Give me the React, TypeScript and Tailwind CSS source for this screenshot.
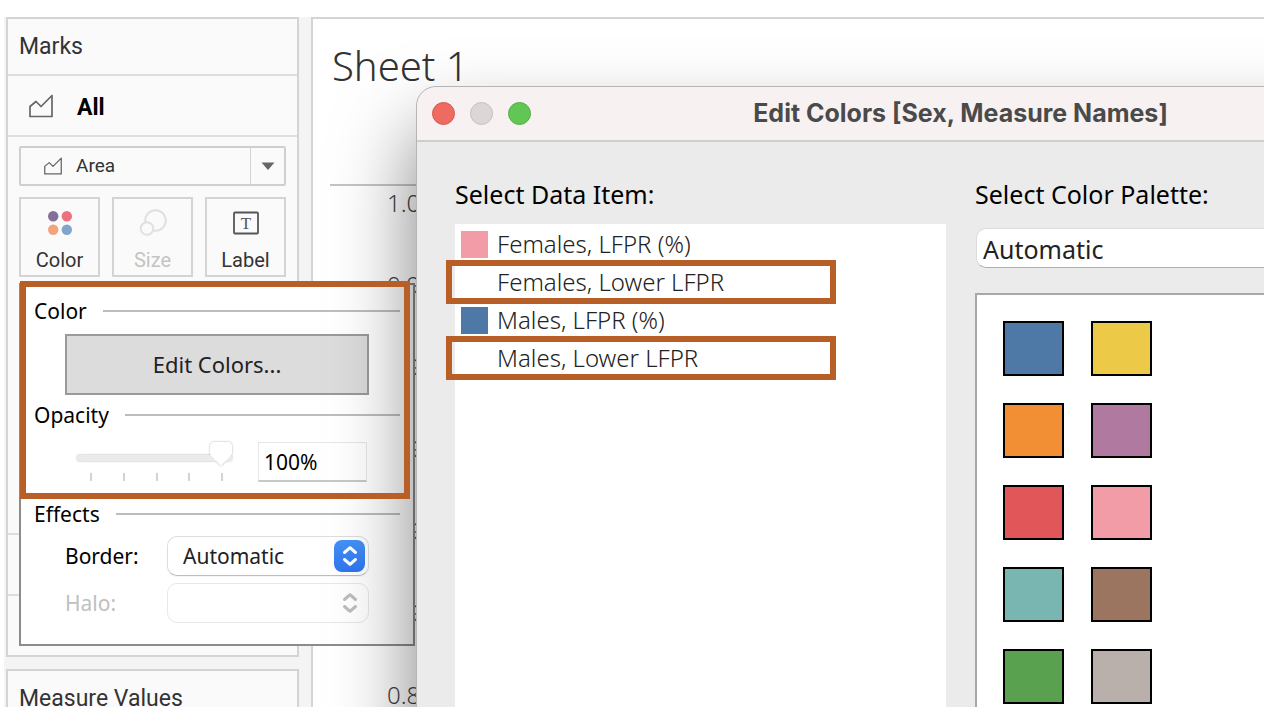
import type { ReactNode } from "react";

const PALETTE = [
  { name: "Blue", fill: "bg-[#4e79a7]" },
  { name: "Yellow", fill: "bg-[#edc948]" },
  { name: "Orange", fill: "bg-[#f28e34]" },
  { name: "Purple", fill: "bg-[#b0799f]" },
  { name: "Red", fill: "bg-[#e15759]" },
  { name: "Pink", fill: "bg-[#f29ca7]" },
  { name: "Teal", fill: "bg-[#79b6b1]" },
  { name: "Brown", fill: "bg-[#9b755f]" },
  { name: "Green", fill: "bg-[#59a14f]" },
  { name: "Grey", fill: "bg-[#bab0ab]" },
];

const ITEMS = [
  { label: "Females, LFPR (%)", fill: "bg-[#f29ca7]", marked: false },
  { label: "Females, Lower LFPR", fill: "bg-white", marked: true },
  { label: "Males, LFPR (%)", fill: "bg-[#4e79a7]", marked: false },
  { label: "Males, Lower LFPR", fill: "bg-white", marked: true },
];

const AXIS = ["1.00", "0.98", "0.96", "0.94", "0.92", "0.90", "0.88"];

function AreaIcon({ className }: { className: string }) {
  return (
    <svg viewBox="0 0 24 24" fill="none" stroke="#666" strokeWidth="1.7" strokeLinejoin="round" className={className} aria-hidden="true">
      <path d="M1 12.5 L7 7.5 L12 12.5 L23 1.5 V22.5 H1 Z" />
    </svg>
  );
}

function Chevrons({ className }: { className: string }) {
  return (
    <svg viewBox="0 0 16 24" fill="none" stroke="currentColor" strokeWidth="3" strokeLinecap="round" strokeLinejoin="round" className={className} aria-hidden="true">
      <path d="M2.5 8.5 L8 3.7 L13.5 8.5 M2.5 15.5 L8 20.3 L13.5 15.5" />
    </svg>
  );
}

function MarkButton({ label, disabled, children }: { label: string; disabled?: boolean; children: ReactNode }) {
  return (
    <button
      type="button"
      disabled={disabled}
      className="flex h-20 flex-1 flex-col items-center border-2 border-[#d4d4d4] bg-[#fafafa] pt-2 font-[Roboto,sans-serif] text-[20px] leading-7 text-[#333] disabled:text-[#c4c4c4]"
    >
      <span className="mb-[7px] flex h-8 items-center">{children}</span>
      {label}
    </button>
  );
}

function SectionTitle({ children }: { children: ReactNode }) {
  return (
    <h3 className="flex h-8 items-center gap-4 text-[21px] text-black">
      <span className="pt-0.5">{children}</span>
      <span className="h-0.5 flex-1 bg-[#bdbdbd]" />
    </h3>
  );
}

function Sidebar() {
  return (
    <aside className="flex w-[295px] shrink-0 flex-col gap-3 pr-0.5 font-[Roboto,sans-serif] text-[#333]">
      <section className="h-[640px] shrink-0 border-2 border-[#d4d4d4] bg-[#fafafa]">
        <h2 className="flex h-[55px] items-center px-[11px] pt-0.5 text-[23px]">Marks</h2>
        <div className="flex h-[63px] items-center border-y-2 border-[#dedede] px-[11px]">
          <AreaIcon className="ml-2.5 size-6" />
          <span className="ml-6 pt-1.5 text-[23px] font-bold text-black">All</span>
        </div>
        <div className="flex flex-col gap-[11px] px-[11px] pt-[9px]">
          <button type="button" className="flex h-10 items-stretch rounded-xs border-2 border-[#cfcfcf] text-[19px]">
            <span className="flex flex-1 items-center pl-[23px]">
              <AreaIcon className="size-[18px]" />
              <span className="ml-3.5">Area</span>
            </span>
            <span className="flex w-[34px] items-center justify-center border-l border-[#d4d4d4]">
              <svg viewBox="0 0 14 8" className="h-2 w-3.5" aria-hidden="true">
                <path d="M0.5 0.5 H13.5 L7 8 Z" fill="#666" />
              </svg>
            </span>
          </button>
          <div className="flex gap-3">
            <MarkButton label="Color">
              <svg viewBox="0 0 24 24" className="size-6" aria-hidden="true">
                <circle cx="5.2" cy="5.2" r="5.2" fill="#846f9b" />
                <circle cx="18.8" cy="5.2" r="5.2" fill="#ee7080" />
                <circle cx="5.2" cy="18.8" r="5.2" fill="#f2a57c" />
                <circle cx="18.8" cy="18.8" r="5.2" fill="#82a5cb" />
              </svg>
            </MarkButton>
            <MarkButton label="Size" disabled>
              <svg viewBox="0 0 28 28" fill="#fafafa" stroke="#e0e0e0" strokeWidth="2" className="size-7" aria-hidden="true">
                <circle cx="16.5" cy="11.5" r="10.3" />
                <circle cx="8" cy="19.5" r="6.3" />
              </svg>
            </MarkButton>
            <MarkButton label="Label">
              <svg viewBox="0 0 28 24" className="h-6 w-7" aria-hidden="true">
                <rect x="2" y="1.5" width="24" height="21" rx="1" fill="none" stroke="#555" strokeWidth="1.8" />
                <text x="14" y="18" textAnchor="middle" fill="#555" className="font-['Liberation_Serif',serif] text-[17px]">T</text>
              </svg>
            </MarkButton>
          </div>
        </div>
        <div className="mt-[256px] h-[63px] border-y-2 border-[#dedede]" />
      </section>
      <section className="flex-1 border-2 border-[#d4d4d4] bg-[#fafafa] px-[11px] pt-3">
        <h2 className="text-[23px] leading-8">Measure Values</h2>
      </section>
    </aside>
  );
}

function Sheet() {
  return (
    <section className="ml-2.5 flex-1 border-t-2 border-l-2 border-[#d4d4d4] bg-white pl-[17px]">
      <h1 className="pt-4 pl-0.5 text-[40px] leading-[62px] font-light text-[#333]">Sheet 1</h1>
      <div className="mt-[87px] border-t-2 border-[#c4c4c4] pl-[57px]">
        <ul className="flex flex-col gap-12 text-[24px] leading-[34px] font-light text-[#444]">
          {AXIS.map((v) => (
            <li key={v}>{v}</li>
          ))}
        </ul>
      </div>
    </section>
  );
}

function ColorPopup() {
  return (
    <div className="absolute top-[266px] left-[19px] w-[396px] border-2 border-[#8c8c8c] bg-white px-[13px] pt-2.5 pb-[21px] text-[21px] text-black">
      <SectionTitle>Color</SectionTitle>
      <button type="button" className="mt-[7px] mb-1 ml-[31px] h-[61px] w-[304px] border-2 border-[#9a9a9a] bg-[#dcdcdc] text-[22px] text-[#222]">
        Edit Colors...
      </button>
      <SectionTitle>Opacity</SectionTitle>
      <div className="mt-[11px] mb-4 ml-[43px] flex h-10 items-stretch gap-[26px]">
        <div className="flex w-[155px] flex-col">
          <input
            type="range"
            aria-label="Opacity"
            min={0}
            max={100}
            defaultValue={100}
            className="mt-1 h-6 w-full appearance-none bg-transparent drop-shadow-[0_0_1px_rgba(0,0,0,0.3)] [&::-webkit-slider-runnable-track]:h-1.5 [&::-webkit-slider-runnable-track]:rounded-full [&::-webkit-slider-runnable-track]:bg-[#ebebeb] [&::-webkit-slider-thumb]:-mt-[13px] [&::-webkit-slider-thumb]:h-6 [&::-webkit-slider-thumb]:w-[22px] [&::-webkit-slider-thumb]:appearance-none [&::-webkit-slider-thumb]:bg-white [&::-webkit-slider-thumb]:[clip-path:polygon(12%_0,88%_0,100%_12%,100%_50%,50%_100%,0_50%,0_12%)]"
          />
          <div className="mt-[3px] flex justify-between pr-[9px] pl-[13px]">
            {[0, 25, 50, 75, 100].map((t) => (
              <span key={t} className="h-2 w-0.5 bg-[#d2d2d2]" />
            ))}
          </div>
        </div>
        <input
          aria-label="Opacity percent"
          defaultValue="100%"
          className="w-[109px] border border-b-2 border-[#e6e6e6] border-b-[#c8c8c8] bg-white px-[5px] pt-0.5"
        />
      </div>
      <SectionTitle>Effects</SectionTitle>
      <div className="mt-1.5 ml-[31px] flex items-center">
        <label htmlFor="border" className="w-[102px] pt-0.5">Border:</label>
        <div className="relative">
          <select id="border" className="h-10 w-[202px] appearance-none rounded-[10px] border border-[#dedede] border-b-[#bdbdbd] bg-white pt-0.5 pl-[15px] text-[#222] shadow-xs">
            <option>Automatic</option>
          </select>
          <span className="pointer-events-none absolute inset-y-1 right-1 flex w-[31px] items-center justify-center rounded-lg bg-linear-to-b from-[#4492f7] to-[#2f76ef] text-white">
            <Chevrons className="h-6 w-4" />
          </span>
        </div>
      </div>
      <div className="mt-[7px] ml-[31px] flex items-center text-[#c0c0c0]">
        <label htmlFor="halo" className="w-[102px] pt-0.5">Halo:</label>
        <div className="relative">
          <select id="halo" disabled className="h-10 w-[202px] appearance-none rounded-[10px] border border-[#e8e8e8] bg-white opacity-100" />
          <span className="pointer-events-none absolute inset-y-1 right-1 flex w-[31px] items-center justify-center text-[#bdbdbd]">
            <Chevrons className="h-6 w-4" />
          </span>
        </div>
      </div>
    </div>
  );
}

function EditColorsDialog() {
  return (
    <div
      role="dialog"
      aria-labelledby="dialog-title"
      className="absolute top-[69px] -bottom-12 left-[416px] flex w-[1089px] flex-col rounded-[20px] border border-[#b5b5b5] bg-[#ebebeb] shadow-[0_45px_80px_rgba(0,0,0,0.5)]"
    >
      <header className="relative flex h-[55px] shrink-0 items-center justify-center rounded-t-[20px] border-b-2 border-[#cfcdcd] bg-[#f7f1f1]">
        <div className="absolute left-[15px] flex gap-[15px]">
          <button type="button" aria-label="Close" className="size-[23px] rounded-full border border-[#d9584c] bg-[#ed6b60]" />
          <button type="button" aria-label="Minimize" disabled className="size-[23px] rounded-full border border-[#c6c1c1] bg-[#dcd6d6]" />
          <button type="button" aria-label="Zoom" className="size-[23px] rounded-full border border-[#54b045] bg-[#62c655]" />
        </div>
        <h2 id="dialog-title" className="font-[Inter,sans-serif] text-[25px] font-bold text-[#4a4a4a]">
          Edit Colors [Sex, Measure Names]
        </h2>
      </header>
      <div className="flex min-h-0 flex-1 gap-[29px] pt-[34px] pl-[38px] text-[25px] text-black">
        <div className="flex w-[491px] flex-col">
          <h3 className="mb-3 leading-9">Select Data Item:</h3>
          <ul className="flex-1 bg-white pt-px text-[24px] font-light text-[#222]">
            {ITEMS.map((item) => (
              <li key={item.label} className="relative flex h-[38px] items-center gap-[9px] pl-1.5">
                <span className={`size-[27px] ${item.fill}`} />
                {item.label}
                {item.marked && <span className="absolute -top-[3px] -left-[9px] h-11 w-[390px] border-6 border-[#b85f28]" />}
              </li>
            ))}
          </ul>
        </div>
        <div className="flex flex-1 flex-col">
          <label htmlFor="palette" className="mb-4 leading-9">Select Color Palette:</label>
          <select id="palette" className="ml-px h-10 shrink-0 appearance-none rounded-[10px] border border-[#dcdcdc] border-b-[#b0b0b0] bg-white px-1.5 pt-0.5 text-[#222]">
            <option>Automatic</option>
          </select>
          <div className="mt-[25px] flex-1 border-t-2 border-l-2 border-[#a8a8a8] bg-white p-[26px]">
            <div className="grid grid-cols-[61px_61px] gap-[27px]">
              {PALETTE.map((c) => (
                <button key={c.name} type="button" aria-label={c.name} className={`h-[55px] border-2 border-black ${c.fill}`} />
              ))}
            </div>
          </div>
        </div>
      </div>
    </div>
  );
}

export default function App() {
  return (
    <div className="h-screen bg-white pt-[17px] pb-[21px] font-['Noto_Sans',sans-serif]">
      <main className="relative h-full overflow-hidden">
        <div className="ml-1 flex h-full bg-[#f4f4f4] pl-0.5">
          <Sidebar />
          <Sheet />
        </div>
        <ColorPopup />
        <EditColorsDialog />
        <div className="pointer-events-none absolute top-[264px] left-5 h-[218px] w-[390px] border-6 border-[#b85f28]" />
      </main>
    </div>
  );
}
